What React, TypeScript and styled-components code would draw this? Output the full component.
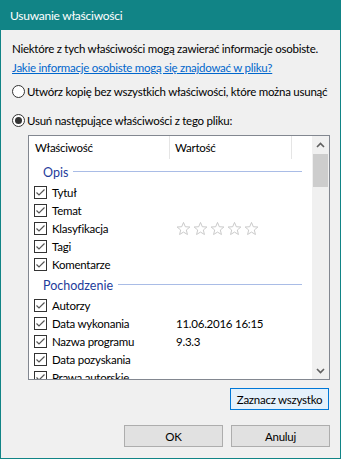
import React from "react";
import styled, { createGlobalStyle } from "styled-components";

const GlobalStyle = createGlobalStyle`
  html, body { margin: 0; padding: 0; background: #f0f0f0; }
  body {
    font-family: Lato, "Noto Sans", sans-serif;
    font-size: 11.5px;
    letter-spacing: -0.25px;
    color: #000;
  }
  * { box-sizing: border-box; }
`;

const Window = styled.div`
  width: 341px;
  height: 459px;
  border: 1px solid #118486;
  border-top: none;
  background: #f0f0f0;
  display: flex;
  flex-direction: column;
`;

const TitleBar = styled.div`
  height: 30px;
  margin: 0 -1px;
  padding-left: 10px;
  background: #118486;
  color: #fff;
  font-size: 12px;
  display: flex;
  align-items: center;
`;

const Body = styled.div`
  flex: 1;
  display: flex;
  flex-direction: column;
  padding: 11px 9px 11px 11px;
`;

const Line = styled.div<{ $mt?: number }>`
  line-height: 16px;
  height: 16px;
  margin-top: ${(p) => p.$mt ?? 0}px;
  white-space: nowrap;
`;

const Link = styled.a`
  color: #0066cc;
  text-decoration: underline;
  cursor: pointer;
`;

const RadioRow = styled.label<{ $mt: number }>`
  display: flex;
  align-items: center;
  gap: 2px;
  height: 16px;
  margin-top: ${(p) => p.$mt}px;
  white-space: nowrap;
`;

const Radio = styled.span<{ $on?: boolean }>`
  width: 13px;
  height: 13px;
  border: 1px solid #333;
  border-radius: 50%;
  background: #fff;
  display: flex;
  align-items: center;
  justify-content: center;
  flex: none;
  &::after {
    content: "";
    display: ${(p) => (p.$on ? "block" : "none")};
    width: 7px;
    height: 7px;
    border-radius: 50%;
    background: #333;
  }
`;

const ListBox = styled.div`
  margin: 7px 0 0 16px;
  width: 302px;
  height: 245px;
  border: 1px solid #828790;
  background: #fff;
  display: flex;
`;

const ListMain = styled.div`
  flex: 1;
  overflow: hidden;
`;

const Header = styled.div`
  height: 24px;
  display: grid;
  grid-template-columns: 141px 122px 1fr;
`;

const HeaderCell = styled.div<{ $pl: number }>`
  padding-left: ${(p) => p.$pl}px;
  display: flex;
  align-items: center;
  border-right: 1px solid #e5e5e5;
  height: 23px;
  &:last-child { border-right: none; }
`;

const GroupRow = styled.div`
  height: 23px;
  display: flex;
  align-items: center;
  padding: 2px 10px 0 14px;
  gap: 5px;
  color: #1e3c9b;
  font-size: 12.5px;
  letter-spacing: 0;
  &::after {
    content: "";
    flex: 1;
    height: 1px;
    background: #a9bce6;
    margin-top: -2px;
  }
`;

const Row = styled.div`
  height: 18px;
  display: grid;
  grid-template-columns: 147px 1fr;
  align-items: center;
`;

const NameCell = styled.div`
  display: flex;
  align-items: center;
  gap: 5px;
  padding-left: 5px;
  white-space: nowrap;
`;

const Check = styled.span`
  width: 13px;
  height: 13px;
  border: 1px solid #333;
  background: #fff;
  display: flex;
  align-items: center;
  justify-content: center;
  flex: none;
`;

const Value = styled.div`
  white-space: nowrap;
  display: flex;
  align-items: center;
  gap: 2px;
`;

const ScrollBar = styled.div`
  width: 17px;
  background: #f0f0f0;
  display: flex;
  flex-direction: column;
`;

const ScrollArrow = styled.div`
  height: 17px;
  display: flex;
  align-items: center;
  justify-content: center;
`;

const Track = styled.div`
  flex: 1;
  padding: 1px 1px 0 1px;
`;

const Thumb = styled.div`
  height: 33px;
  background: #cdcdcd;
`;

const SelectRow = styled.div`
  display: flex;
  justify-content: flex-end;
  margin-top: 8px;
  padding-right: 2px;
`;

const Button = styled.button<{ $focus?: boolean }>`
  width: 99px;
  height: 22px;
  font: inherit;
  letter-spacing: inherit;
  color: #000;
  padding: 0;
  white-space: nowrap;
  background: ${(p) => (p.$focus ? "#e5f1fb" : "#e1e1e1")};
  border: 1px solid ${(p) => (p.$focus ? "#0078d7" : "#adadad")};
`;

const ButtonRow = styled.div`
  margin-top: auto;
  display: flex;
  justify-content: flex-end;
  gap: 8px;
  padding-right: 1px;
`;

const CheckMark = () => (
  <svg width="11" height="11" viewBox="0 0 11 11">
    <path d="M1.5 5.5 L4 8 L9.5 2.5" fill="none" stroke="#555" strokeWidth="1.2" />
  </svg>
);

const Star = () => (
  <svg width="15" height="15" viewBox="0 0 16 15">
    <path
      d="M8 1 L9.9 5.6 L14.8 5.9 L11 9.1 L12.2 13.9 L8 11.3 L3.8 13.9 L5 9.1 L1.2 5.9 L6.1 5.6 Z"
      fill="none"
      stroke="#c6c6c6"
      strokeWidth="1"
      strokeLinejoin="round"
    />
  </svg>
);

const Chevron = ({ up }: { up?: boolean }) => (
  <svg width="9" height="6" viewBox="0 0 9 6">
    <path
      d={up ? "M1 5 L4.5 1.5 L8 5" : "M1 1 L4.5 4.5 L8 1"}
      fill="none"
      stroke="#606060"
      strokeWidth="1.6"
    />
  </svg>
);

type Item = { name: string; value?: React.ReactNode };

const groups: { title: string; items: Item[] }[] = [
  {
    title: "Opis",
    items: [
      { name: "Tytuł" },
      { name: "Temat" },
      {
        name: "Klasyfikacja",
        value: (
          <>
            <Star />
            <Star />
            <Star />
            <Star />
            <Star />
          </>
        ),
      },
      { name: "Tagi" },
      { name: "Komentarze" },
    ],
  },
  {
    title: "Pochodzenie",
    items: [
      { name: "Autorzy" },
      { name: "Data wykonania", value: "11.06.2016 16:15" },
      { name: "Nazwa programu", value: "9.3.3" },
      { name: "Data pozyskania" },
      { name: "Prawa autorskie" },
    ],
  },
];

export default function App() {
  return (
    <>
      <GlobalStyle />
      <Window>
        <TitleBar>Usuwanie właściwości</TitleBar>
        <Body>
          <Line>Niektóre z tych właściwości mogą zawierać informacje osobiste.</Line>
          <Line $mt={3}>
            <Link>Jakie informacje osobiste mogą się znajdować w pliku?</Link>
          </Line>
          <RadioRow $mt={7}>
            <Radio />
            Utwórz kopię bez wszystkich właściwości, które można usunąć
          </RadioRow>
          <RadioRow $mt={13}>
            <Radio $on />
            Usuń następujące właściwości z tego pliku:
          </RadioRow>
          <ListBox>
            <ListMain>
              <Header>
                <HeaderCell $pl={6}>Właściwość</HeaderCell>
                <HeaderCell $pl={5}>Wartość</HeaderCell>
                <HeaderCell $pl={0} />
              </Header>
              {groups.map((g) => (
                <React.Fragment key={g.title}>
                  <GroupRow>{g.title}</GroupRow>
                  {g.items.map((it) => (
                    <Row key={it.name}>
                      <NameCell>
                        <Check>
                          <CheckMark />
                        </Check>
                        {it.name}
                      </NameCell>
                      <Value>{it.value}</Value>
                    </Row>
                  ))}
                </React.Fragment>
              ))}
            </ListMain>
            <ScrollBar>
              <ScrollArrow>
                <Chevron up />
              </ScrollArrow>
              <Track>
                <Thumb />
              </Track>
              <ScrollArrow>
                <Chevron />
              </ScrollArrow>
            </ScrollBar>
          </ListBox>
          <SelectRow>
            <Button $focus>Zaznacz wszystko</Button>
          </SelectRow>
          <ButtonRow>
            <Button>OK</Button>
            <Button>Anuluj</Button>
          </ButtonRow>
        </Body>
      </Window>
    </>
  );
}
